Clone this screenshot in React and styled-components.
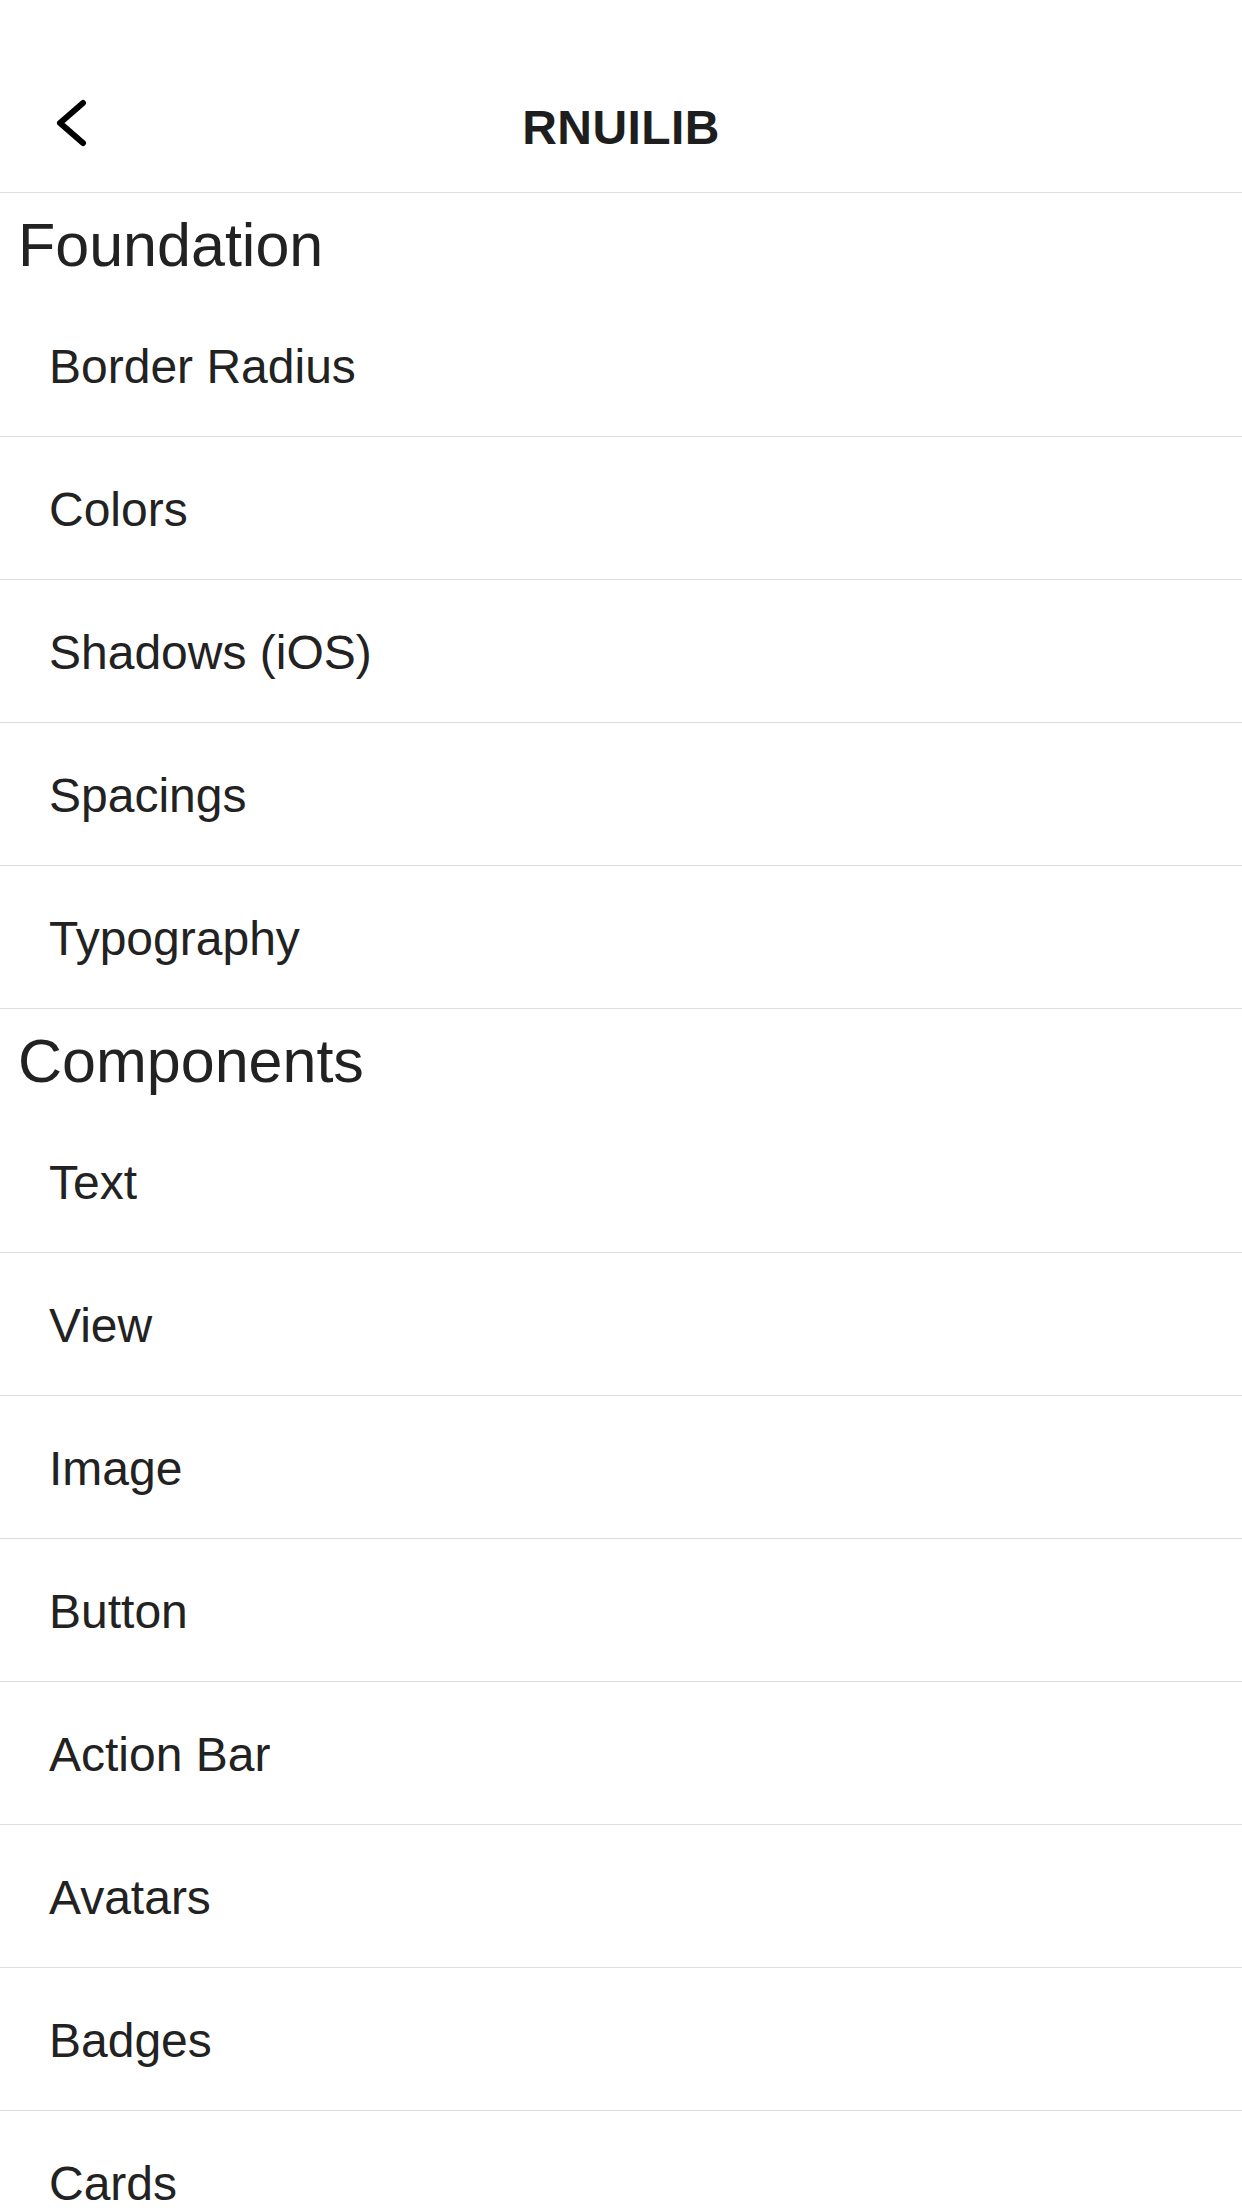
import React from "react";
import styled, { createGlobalStyle } from "styled-components";

const GlobalStyle = createGlobalStyle`
  html, body {
    margin: 0;
    padding: 0;
    background: #ffffff;
    overflow: hidden;
  }
  body {
    font-family: "Liberation Sans", Arial, sans-serif;
    color: #222222;
  }
`;

const Screen = styled.div`
  width: 1242px;
  background: #ffffff;
`;

const NavBar = styled.header`
  height: 193px;
  box-sizing: border-box;
  padding-top: 60px;
  border-bottom: 1px solid #dedede;
  display: grid;
  grid-template-columns: 1fr auto 1fr;
  align-items: center;
`;

const BackButton = styled.button`
  justify-self: start;
  display: flex;
  align-items: center;
  background: none;
  border: 0;
  padding: 0;
  margin: 0 0 6px 56px;
  cursor: pointer;
`;

const Title = styled.h1`
  margin: 0;
  padding-top: 3px;
  font-size: 48px;
  font-weight: 600;
  letter-spacing: 0.4px;
  line-height: 1;
  color: #1e1e1e;
`;

const SectionTitle = styled.h2`
  margin: 0;
  height: 101px;
  box-sizing: border-box;
  padding: 4px 0 0 18px;
  display: flex;
  align-items: center;
  font-size: 61px;
  font-weight: 400;
  line-height: 1;
  color: #222222;
`;

const Row = styled.div`
  height: 143px;
  box-sizing: border-box;
  border-bottom: 1px solid #dedede;
  display: flex;
  align-items: center;
  padding: 4px 0 0 ${props => props.indent || 49}px;
  font-size: 48px;
  line-height: 1;
  color: #222222;
`;

const sections = [
  {
    title: "Foundation",
    items: ["Border Radius", "Colors", "Shadows (iOS)", "Spacings", "Typography"]
  },
  {
    title: "Components",
    items: ["Text", "View", "Image", "Button", "Action Bar", "Avatars", "Badges", "Cards"]
  }
];

const ChevronLeft = () => (
  <svg width="32" height="48" viewBox="0 0 32 48" fill="none">
    <polyline
      points="27,4 4,24 27,44"
      stroke="#000000"
      strokeWidth="6"
      strokeLinecap="round"
      strokeLinejoin="round"
    />
  </svg>
);

const App = () => {
  return (
    <Screen>
      <GlobalStyle />
      <NavBar>
        <BackButton aria-label="Back">
          <ChevronLeft />
        </BackButton>
        <Title>RNUILIB</Title>
        <div />
      </NavBar>
      {sections.map(section => (
        <section key={section.title}>
          <SectionTitle>{section.title}</SectionTitle>
          {section.items.map(item => (
            <Row key={item}>{item}</Row>
          ))}
        </section>
      ))}
    </Screen>
  );
};

export default App;
